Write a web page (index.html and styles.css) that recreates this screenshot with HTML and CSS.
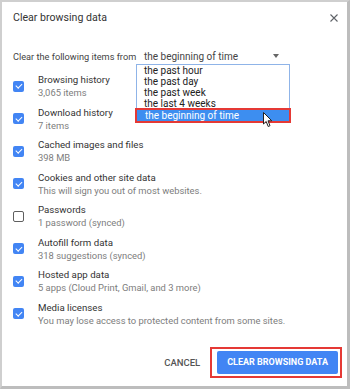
FILE: index.html
```html
<!DOCTYPE html>
<html>
<head>
  <title>Clear browsing data</title>
  <link rel="stylesheet" href="styles.css">
</head>
<body>
  <div class="cbd-frame">
    <div class="cbd-dialog">
      <div class="cbd-header">
        <div class="cbd-title">Clear browsing data</div>
        <svg class="cbd-close" width="8" height="8" viewBox="0 0 8 8">
          <path d="M0.5 0.5 L7.5 7.5 M7.5 0.5 L0.5 7.5" stroke="#5f6368" stroke-width="1.1" fill="none"/>
        </svg>
      </div>

      <div class="cbd-from">
        <span class="cbd-from_label">Clear the following items from</span>
        <div class="cbd-select">
          <span>the beginning of time</span>
          <span class="cbd-select_arrow"></span>
          <div class="cbd-menu">
            <div class="cbd-menu_item">the past hour</div>
            <div class="cbd-menu_item">the past day</div>
            <div class="cbd-menu_item">the past week</div>
            <div class="cbd-menu_item">the last 4 weeks</div>
            <div class="cbd-menu_item cbd-menu_item--active">the beginning of time
              <svg class="cbd-cursor" width="10" height="16" viewBox="0 0 10 16">
                <path d="M0.5 0.5 L0.5 12 L3.2 9.5 L5.2 14.5 L7 13.7 L5 8.8 L8.8 8.8 Z" fill="#fff" stroke="#222" stroke-width="1"/>
              </svg>
            </div>
          </div>
        </div>
      </div>

      <div class="cbd-list">
        <div class="cbd-row">
          <span class="cbd-check cbd-check--on"></span>
          <div class="cbd-text"><div class="cbd-name">Browsing history</div><div class="cbd-sub">3,065 items</div></div>
        </div>
        <div class="cbd-row">
          <span class="cbd-check cbd-check--on"></span>
          <div class="cbd-text"><div class="cbd-name">Download history</div><div class="cbd-sub">7 items</div></div>
        </div>
        <div class="cbd-row">
          <span class="cbd-check cbd-check--on"></span>
          <div class="cbd-text"><div class="cbd-name">Cached images and files</div><div class="cbd-sub">398 MB</div></div>
        </div>
        <div class="cbd-row">
          <span class="cbd-check cbd-check--on"></span>
          <div class="cbd-text"><div class="cbd-name">Cookies and other site data</div><div class="cbd-sub">This will sign you out of most websites.</div></div>
        </div>
        <div class="cbd-row">
          <span class="cbd-check"></span>
          <div class="cbd-text"><div class="cbd-name">Passwords</div><div class="cbd-sub">1 password (synced)</div></div>
        </div>
        <div class="cbd-row">
          <span class="cbd-check cbd-check--on"></span>
          <div class="cbd-text"><div class="cbd-name">Autofill form data</div><div class="cbd-sub">318 suggestions (synced)</div></div>
        </div>
        <div class="cbd-row">
          <span class="cbd-check cbd-check--on"></span>
          <div class="cbd-text"><div class="cbd-name">Hosted app data</div><div class="cbd-sub">5 apps (Cloud Print, Gmail, and 3 more)</div></div>
        </div>
        <div class="cbd-row">
          <span class="cbd-check cbd-check--on"></span>
          <div class="cbd-text"><div class="cbd-name">Media licenses</div><div class="cbd-sub">You may lose access to protected content from some sites.</div></div>
        </div>
      </div>

      <div class="cbd-actions">
        <span class="cbd-cancel">CANCEL</span>
        <div class="cbd-highlight">
          <span class="cbd-confirm">CLEAR BROWSING DATA</span>
        </div>
      </div>
    </div>
  </div>
</body>
</html>
```

FILE: styles.css
```css
/* Диалог очистки истории */
body {
    margin: 0;
    font-family: Roboto, 'Noto Sans', sans-serif;
    color: #333;
}

.cbd-frame {
    width: 350px;
    height: 389px;
    box-sizing: border-box;
    border: 2px solid #cfcfcf;
    border-right-width: 3px;
    border-bottom-width: 3px;
    border-right-color: #bdbdbd;
    border-bottom-color: #bdbdbd;
    background: #fff;
}

.cbd-dialog {
    padding: 0 9px 0 11px;
}

.cbd-header {
    display: flex;
    justify-content: space-between;
    align-items: center;
    height: 30px;
    padding-top: 1px;
    box-sizing: border-box;
}

.cbd-title {
    font-size: 10.6px;
    color: #333;
}

.cbd-from {
    display: flex;
    align-items: stretch;
    margin-top: 16px;
    height: 16px;
    font-size: 10px;
}

.cbd-from_label {
    display: flex;
    align-items: center;
    flex: none;
    width: 131px;
    white-space: nowrap;
    font-size: 9.2px;
    color: #444;
}

.cbd-select {
    position: relative;
    display: flex;
    justify-content: space-between;
    align-items: center;
    width: 137px;
    color: #444;
}

.cbd-select_arrow {
    width: 0;
    height: 0;
    border-left: 3.5px solid transparent;
    border-right: 3.5px solid transparent;
    border-top: 4px solid #666;
    margin-right: 2px;
}

.cbd-menu {
    position: absolute;
    top: 16px;
    left: -8px;
    width: 152px;
    background: #fff;
    border: 1px solid #8fb4e8;
    z-index: 2;
    font-size: 10px;
    color: #222;
}

.cbd-menu_item {
    height: 11px;
    line-height: 11px;
    padding-left: 7px;
}

.cbd-menu_item--active {
    position: relative;
    height: 11px;
    line-height: 11px;
    margin: -1px -2px -2px -2px;
    padding-left: 8px;
    background: #3d8ef0;
    color: #fff;
    border: 2px solid #e53935;
}

.cbd-cursor {
    position: absolute;
    right: 16px;
    top: 2px;
}

.cbd-list {
    display: flex;
    flex-direction: column;
    margin-top: 6px;
}

.cbd-row {
    display: flex;
    align-items: center;
    height: 32.5px;
}

.cbd-check {
    width: 11px;
    height: 11px;
    box-sizing: border-box;
    border-radius: 2px;
    border: 1.5px solid #5f5f5f;
    margin: 0 14px 0 0;
    flex-shrink: 0;
    position: relative;
}

.cbd-check--on {
    background: #4285f4;
    border: none;
}

.cbd-check--on::after {
    content: '';
    position: absolute;
    left: 3.5px;
    top: 1.5px;
    width: 2.5px;
    height: 5px;
    border-right: 1.5px solid #fff;
    border-bottom: 1.5px solid #fff;
    transform: rotate(45deg);
}

.cbd-name {
    font-size: 9.7px;
    color: #333;
    line-height: 13px;
}

.cbd-sub {
    font-size: 9.4px;
    color: #7d7d7d;
    line-height: 13px;
}

.cbd-actions {
    display: flex;
    justify-content: flex-end;
    align-items: center;
    margin-top: 17px;
    margin-right: -4px;
}

.cbd-cancel {
    font-size: 9.5px;
    font-weight: 500;
    color: #555;
    margin-right: 10px;
}

.cbd-highlight {
    border: 2px solid #e53935;
    padding: 2px 2px 2px 5px;
}

.cbd-confirm {
    display: block;
    background: #4285f4;
    color: #fff;
    font-size: 9px;
    font-weight: 700;
    padding: 0 10px;
    height: 23px;
    line-height: 23px;
    border-radius: 2px;
}
```
